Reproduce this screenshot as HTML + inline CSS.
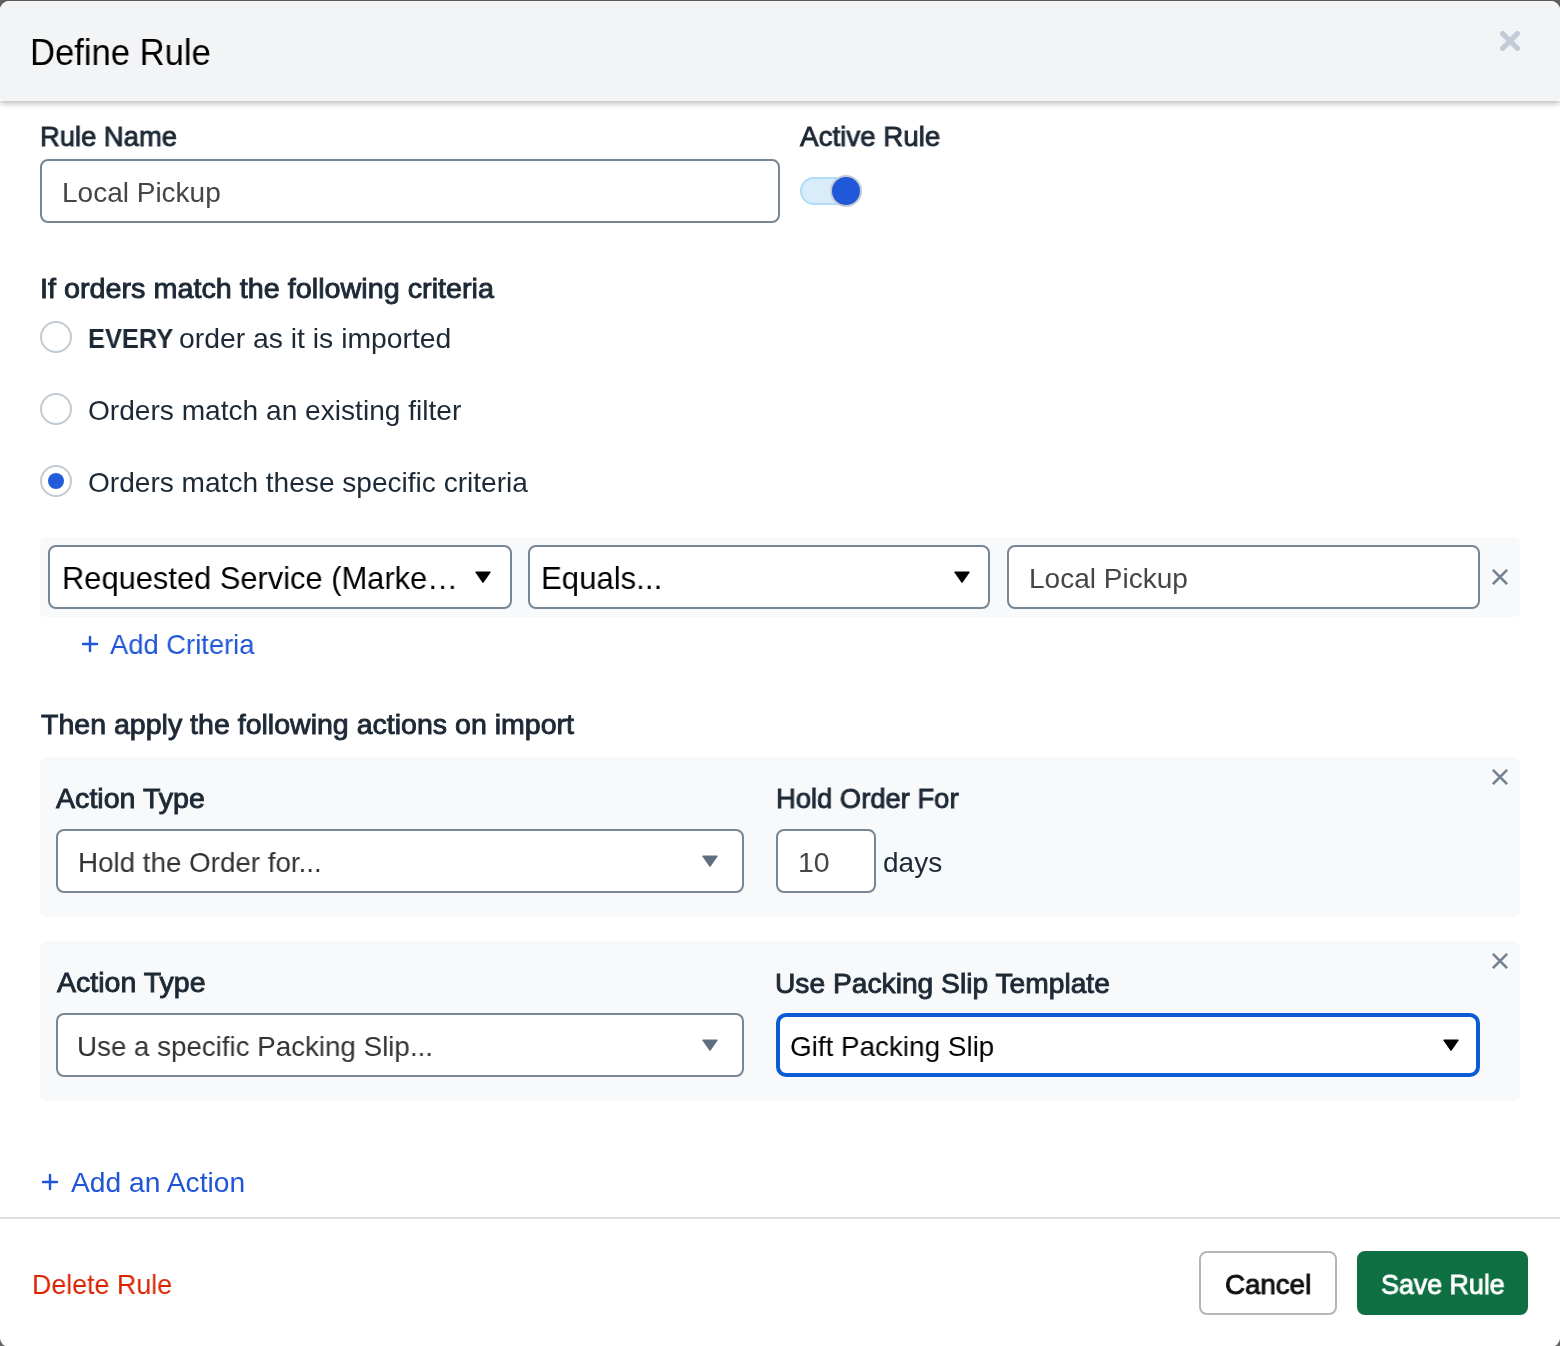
<!DOCTYPE html>
<html><head><meta charset="utf-8">
<style>
*{box-sizing:border-box;margin:0;padding:0}
html,body{width:1560px;height:1346px;overflow:hidden;background:#626262;font-family:"Liberation Sans",sans-serif}
.modal{position:absolute;left:0;top:1px;width:1560px;height:1346px;background:#fff;border-radius:8px;overflow:hidden}
.a{position:absolute}
.t{position:absolute;white-space:nowrap;transform-origin:0 0;z-index:3;will-change:transform}
</style></head><body>
<div class="a" style="left:0;top:1px;width:1560px;height:1346px;background:#fff;border-radius:9px"></div>
<div class="a" style="left:0px;top:1px;width:1560px;height:100px;background:#f3f4f6;box-shadow:0 2px 6px rgba(0,0,0,.3);z-index:1;border-radius:9px 9px 0 0"></div>
<svg class="a" style="left:1500px;top:31px;z-index:2" width="20" height="20" viewBox="0 0 20 20"><path d="M2.6 2.6L17.4 17.4M17.4 2.6L2.6 17.4" stroke="#c3ccd6" stroke-width="5.1" stroke-linecap="round"/></svg>
<div class="a" style="left:40px;top:159px;width:740px;height:64px;border:2px solid #778694;border-radius:8px;background:#fff"></div>
<div class="a" style="left:800px;top:177px;width:62px;height:28px;border-radius:14px;background:#d9ecfa;border:2px solid #b0dcf8"></div>
<div class="a" style="left:830px;top:174.6px;width:32px;height:32.0px;border-radius:50%;background:#1f58d9;border:2px solid #c7ccd2"></div>
<div class="a" style="left:40px;top:321px;width:32px;height:32px;border:2px solid #c1cad4;border-radius:50%;background:#fff"></div>
<div class="a" style="left:40px;top:393px;width:32px;height:32px;border:2px solid #c1cad4;border-radius:50%;background:#fff"></div>
<div class="a" style="left:40px;top:465px;width:32px;height:32px;border:2px solid #c1cad4;border-radius:50%;background:#fff"></div>
<div class="a" style="left:48px;top:473px;width:16px;height:16px;border-radius:50%;background:#215bd9"></div>
<div class="a" style="left:40px;top:537px;width:1480px;height:80px;background:#f8f9fb;border-radius:6px"></div>
<div class="a" style="left:48px;top:545px;width:464px;height:64px;border:2px solid #778694;border-radius:8px;background:#fff"></div>
<div class="a" style="left:528px;top:545px;width:462px;height:64px;border:2px solid #778694;border-radius:8px;background:#fff"></div>
<div class="a" style="left:1007px;top:545px;width:473px;height:64px;border:2px solid #778694;border-radius:8px;background:#fff"></div>
<svg class="a" style="left:475px;top:571px" width="16" height="12" viewBox="0 0 16 12"><path d="M1 1.2H15L8.0 11.2Z" fill="#000" stroke="#000" stroke-width="1.4" stroke-linejoin="round"/></svg>
<svg class="a" style="left:954px;top:571px" width="16" height="12" viewBox="0 0 16 12"><path d="M1 1.2H15L8.0 11.2Z" fill="#000" stroke="#000" stroke-width="1.4" stroke-linejoin="round"/></svg>
<svg class="a" style="left:1490px;top:567px" width="20" height="20" viewBox="0 0 20 20"><path d="M2.9000000000000004 2.9000000000000004L17.1 17.1M17.1 2.9000000000000004L2.9000000000000004 17.1" stroke="#74838f" stroke-width="2.7" stroke-linecap="butt"/></svg>
<svg class="a" style="left:81px;top:635px" width="18" height="18" viewBox="0 0 18 18"><path d="M9 2V16M2 9H16" stroke="#1f55d6" stroke-width="2.4" stroke-linecap="round"/></svg>
<div class="a" style="left:40px;top:757px;width:1480px;height:160px;background:#f8f9fb;border-radius:8px"></div>
<svg class="a" style="left:1490px;top:767px" width="20" height="20" viewBox="0 0 20 20"><path d="M2.9000000000000004 2.9000000000000004L17.1 17.1M17.1 2.9000000000000004L2.9000000000000004 17.1" stroke="#74838f" stroke-width="2.7" stroke-linecap="butt"/></svg>
<div class="a" style="left:56px;top:829px;width:688px;height:64px;border:2px solid #778694;border-radius:8px;background:#fff"></div>
<svg class="a" style="left:702px;top:855px" width="16" height="12" viewBox="0 0 16 12"><path d="M1 1.2H15L8.0 11.2Z" fill="#5f6f7f" stroke="#5f6f7f" stroke-width="1.4" stroke-linejoin="round"/></svg>
<div class="a" style="left:776px;top:829px;width:100px;height:64px;border:2px solid #778694;border-radius:8px;background:#fff"></div>
<div class="a" style="left:40px;top:941px;width:1480px;height:160px;background:#f8f9fb;border-radius:8px"></div>
<svg class="a" style="left:1490px;top:951px" width="20" height="20" viewBox="0 0 20 20"><path d="M2.9000000000000004 2.9000000000000004L17.1 17.1M17.1 2.9000000000000004L2.9000000000000004 17.1" stroke="#74838f" stroke-width="2.7" stroke-linecap="butt"/></svg>
<div class="a" style="left:56px;top:1013px;width:688px;height:64px;border:2px solid #778694;border-radius:8px;background:#fff"></div>
<svg class="a" style="left:702px;top:1039px" width="16" height="12" viewBox="0 0 16 12"><path d="M1 1.2H15L8.0 11.2Z" fill="#5f6f7f" stroke="#5f6f7f" stroke-width="1.4" stroke-linejoin="round"/></svg>
<div class="a" style="left:776px;top:1013px;width:704px;height:64px;border:4px solid #0b5bd3;border-radius:10px;background:#fff"></div>
<svg class="a" style="left:1443px;top:1039px" width="16" height="12" viewBox="0 0 16 12"><path d="M1 1.2H15L8.0 11.2Z" fill="#000" stroke="#000" stroke-width="1.4" stroke-linejoin="round"/></svg>
<svg class="a" style="left:41px;top:1173px" width="18" height="18" viewBox="0 0 18 18"><path d="M9 2V16M2 9H16" stroke="#1f55d6" stroke-width="2.4" stroke-linecap="round"/></svg>
<div class="a" style="left:0px;top:1217px;width:1560px;height:2px;background:#dde1e6"></div>
<div class="a" style="left:1199px;top:1251px;width:138px;height:64px;border:2px solid #b2b6ba;border-radius:8px;background:#fff"></div>
<div class="a" style="left:1357px;top:1251px;width:171px;height:64px;background:#0d6f42;border-radius:8px"></div>
<div class="t" style="left:30.11px;top:31.00px;font-size:36px;line-height:44px;font-weight:normal;color:#000;transform:scaleX(0.9617)">Define Rule</div>
<div class="t" style="left:40.04px;top:119.00px;font-size:28px;line-height:36px;font-weight:normal;-webkit-text-stroke-width:0.9px;color:#1e2936;transform:scaleX(0.9781)">Rule Name</div>
<div class="t" style="left:62.00px;top:175.00px;font-size:28px;line-height:36px;font-weight:normal;color:#464646;transform:scaleX(1.0000)">Local Pickup</div>
<div class="t" style="left:800.30px;top:119.00px;font-size:28px;line-height:36px;font-weight:normal;-webkit-text-stroke-width:0.9px;color:#1e2936;transform:scaleX(0.9908)">Active Rule</div>
<div class="t" style="left:39.95px;top:271.00px;font-size:28px;line-height:36px;font-weight:normal;-webkit-text-stroke-width:0.9px;color:#1e2936;transform:scaleX(1.0272)">If orders match the following criteria</div>
<div class="t" style="left:87.78px;top:321.00px;font-size:28px;line-height:36px;font-weight:bold;color:#1e2936;transform:scaleX(0.9077)">EVERY</div>
<div class="t" style="left:179.39px;top:321.00px;font-size:28px;line-height:36px;font-weight:normal;color:#1e2936;transform:scaleX(1.0116)">order as it is imported</div>
<div class="t" style="left:88.40px;top:393.00px;font-size:28px;line-height:36px;font-weight:normal;color:#1e2936;transform:scaleX(1.0038)">Orders match an existing filter</div>
<div class="t" style="left:88.40px;top:465.00px;font-size:28px;line-height:36px;font-weight:normal;color:#1e2936;transform:scaleX(1.0025)">Orders match these specific criteria</div>
<div class="t" style="left:61.51px;top:558.00px;font-size:32px;line-height:40px;font-weight:normal;color:#000;transform:scaleX(0.9640)">Requested Service (Marke…</div>
<div class="t" style="left:541.28px;top:558.00px;font-size:32px;line-height:40px;font-weight:normal;color:#000;transform:scaleX(0.9731)">Equals...</div>
<div class="t" style="left:1028.80px;top:561.00px;font-size:28px;line-height:36px;font-weight:normal;color:#464646;transform:scaleX(1.0013)">Local Pickup</div>
<div class="t" style="left:110.40px;top:627.00px;font-size:28px;line-height:36px;font-weight:normal;color:#1f55d6;transform:scaleX(0.9770)">Add Criteria</div>
<div class="t" style="left:41.00px;top:707.00px;font-size:28px;line-height:36px;font-weight:normal;-webkit-text-stroke-width:0.9px;color:#1e2936;transform:scaleX(1.0191)">Then apply the following actions on import</div>
<div class="t" style="left:56.20px;top:781.00px;font-size:28px;line-height:36px;font-weight:normal;-webkit-text-stroke-width:0.9px;color:#1e2936;transform:scaleX(1.0214)">Action Type</div>
<div class="t" style="left:77.82px;top:845.00px;font-size:28px;line-height:36px;font-weight:normal;color:#333;transform:scaleX(0.9913)">Hold the Order for...</div>
<div class="t" style="left:775.75px;top:781.00px;font-size:28px;line-height:36px;font-weight:normal;-webkit-text-stroke-width:0.9px;color:#1e2936;transform:scaleX(0.9773)">Hold Order For</div>
<div class="t" style="left:797.76px;top:845.00px;font-size:28px;line-height:36px;font-weight:normal;color:#464646;transform:scaleX(1.0179)">10</div>
<div class="t" style="left:883.00px;top:845.00px;font-size:28px;line-height:36px;font-weight:normal;color:#1e2936;transform:scaleX(0.9965)">days</div>
<div class="t" style="left:56.70px;top:965.30px;font-size:28px;line-height:36px;font-weight:normal;-webkit-text-stroke-width:0.9px;color:#1e2936;transform:scaleX(1.0193)">Action Type</div>
<div class="t" style="left:77.02px;top:1029.00px;font-size:28px;line-height:36px;font-weight:normal;color:#333;transform:scaleX(0.9901)">Use a specific Packing Slip...</div>
<div class="t" style="left:775.29px;top:965.50px;font-size:28px;line-height:36px;font-weight:normal;-webkit-text-stroke-width:0.9px;color:#1e2936;transform:scaleX(1.0070)">Use Packing Slip Template</div>
<div class="t" style="left:790.21px;top:1028.70px;font-size:28px;line-height:36px;font-weight:normal;color:#000;transform:scaleX(0.9941)">Gift Packing Slip</div>
<div class="t" style="left:70.60px;top:1164.70px;font-size:28px;line-height:36px;font-weight:normal;color:#1f55d6;transform:scaleX(1.0082)">Add an Action</div>
<div class="t" style="left:32.09px;top:1267.00px;font-size:28px;line-height:36px;font-weight:normal;color:#dc2300;transform:scaleX(0.9573)">Delete Rule</div>
<div class="t" style="left:1224.91px;top:1267.30px;font-size:28px;line-height:36px;font-weight:normal;-webkit-text-stroke-width:0.9px;color:#111;transform:scaleX(0.9894)">Cancel</div>
<div class="t" style="left:1380.84px;top:1267.30px;font-size:28px;line-height:36px;font-weight:normal;-webkit-text-stroke-width:0.9px;color:#fff;transform:scaleX(0.9575)">Save Rule</div>
</body></html>
